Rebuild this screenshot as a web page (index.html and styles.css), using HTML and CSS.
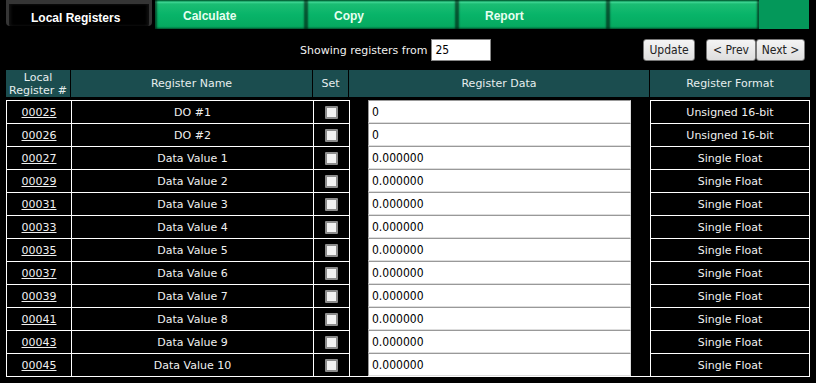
FILE: index.html
```html
<!DOCTYPE html>
<html lang="en">
<head>
    <meta charset="UTF-8">
    <title>Local Registers</title>
    <link rel="stylesheet" href="styles.css">
</head>
<body>
    <!-- Top navigation tabs -->
    <div class="tabs">
        <div class="tab tab-active"><span>Local Registers</span></div>
        <div class="tab">Calculate</div>
        <div class="tab">Copy</div>
        <div class="tab">Report</div>
        <div class="tab"></div>
        <div class="tab-end"></div>
    </div>

    <!-- Paging controls -->
    <div class="controls">
        <div class="showing">
            <span>Showing registers from</span>
            <input type="text" class="start-box" value="25">
        </div>
        <div class="buttons">
            <button class="btn btn-update">Update</button>
            <button class="btn btn-prev">&lt; Prev</button><button class="btn btn-next">Next &gt;</button>
        </div>
    </div>

    <table class="registers">
        <thead>
            <tr>
                <th class="col-num">Local<br>Register #</th>
                <th class="col-name">Register Name</th>
                <th class="col-set">Set</th>
                <th class="col-data">Register Data</th>
                <th class="col-format">Register Format</th>
            </tr>
        </thead>
        <tbody>
            <tr><td><a href="#">00025</a></td><td>DO #1</td><td><input type="checkbox" class="chk"></td><td class="data"><input type="text" class="data-box" value="0"></td><td>Unsigned 16-bit</td></tr>
            <tr><td><a href="#">00026</a></td><td>DO #2</td><td><input type="checkbox" class="chk"></td><td class="data"><input type="text" class="data-box" value="0"></td><td>Unsigned 16-bit</td></tr>
            <tr><td><a href="#">00027</a></td><td>Data Value 1</td><td><input type="checkbox" class="chk"></td><td class="data"><input type="text" class="data-box" value="0.000000"></td><td>Single Float</td></tr>
            <tr><td><a href="#">00029</a></td><td>Data Value 2</td><td><input type="checkbox" class="chk"></td><td class="data"><input type="text" class="data-box" value="0.000000"></td><td>Single Float</td></tr>
            <tr><td><a href="#">00031</a></td><td>Data Value 3</td><td><input type="checkbox" class="chk"></td><td class="data"><input type="text" class="data-box" value="0.000000"></td><td>Single Float</td></tr>
            <tr><td><a href="#">00033</a></td><td>Data Value 4</td><td><input type="checkbox" class="chk"></td><td class="data"><input type="text" class="data-box" value="0.000000"></td><td>Single Float</td></tr>
            <tr><td><a href="#">00035</a></td><td>Data Value 5</td><td><input type="checkbox" class="chk"></td><td class="data"><input type="text" class="data-box" value="0.000000"></td><td>Single Float</td></tr>
            <tr><td><a href="#">00037</a></td><td>Data Value 6</td><td><input type="checkbox" class="chk"></td><td class="data"><input type="text" class="data-box" value="0.000000"></td><td>Single Float</td></tr>
            <tr><td><a href="#">00039</a></td><td>Data Value 7</td><td><input type="checkbox" class="chk"></td><td class="data"><input type="text" class="data-box" value="0.000000"></td><td>Single Float</td></tr>
            <tr><td><a href="#">00041</a></td><td>Data Value 8</td><td><input type="checkbox" class="chk"></td><td class="data"><input type="text" class="data-box" value="0.000000"></td><td>Single Float</td></tr>
            <tr><td><a href="#">00043</a></td><td>Data Value 9</td><td><input type="checkbox" class="chk"></td><td class="data"><input type="text" class="data-box" value="0.000000"></td><td>Single Float</td></tr>
            <tr class="last"><td><a href="#">00045</a></td><td>Data Value 10</td><td><input type="checkbox" class="chk"></td><td class="data"><input type="text" class="data-box" value="0.000000"></td><td>Single Float</td></tr>
        </tbody>
    </table>
</body>
</html>
```

FILE: styles.css
```css
body {
    margin: 0;
    background-color: #000;
    color: #f0f0f0;
    font-family: "DejaVu Sans", Verdana, sans-serif;
    font-size: 11px;
}
/* Tabs */
.tabs {
    display: flex;
    height: 29px;
}
.tab {
    width: 151px;
    height: 29px;
    box-sizing: border-box;
    padding-left: 28px;
    line-height: 32px;
    font-family: "Liberation Sans", Arial, sans-serif;
    font-weight: bold;
    font-size: 12px;
    color: #e6fff0;
    background: linear-gradient(#0b8a4e 0, #0a9a58 1px, #43d898 2px, #1bbd73 4px, #08b469 50%, #05aa60 90%, #03874b 100%);
    box-shadow: inset 2px 0 2px rgba(0, 0, 0, 0.55), inset -2px 0 2px rgba(0, 0, 0, 0.55);
}
.tab-active {
    width: 155px;
    padding: 0 3px 0 6px;
    background: #000;
    box-shadow: none;
    color: #fff;
}
.tab-active span {
    display: block;
    height: 22px;
    padding-left: 22px;
    line-height: 28px;
    border: 3px solid #353535;
    border-top-width: 4px;
    border-bottom: none;
    border-radius: 0 0 4px 4px;
    box-shadow: inset 2px 0 3px #111, inset -2px 0 3px #111;
    background: #000;
}
.tab-end {
    width: 50px;
    background-color: #04985a;
}
/* Controls row */
.controls {
    display: flex;
    align-items: center;
    margin-top: 10px;
    padding: 0 11px 0 300px;
    height: 22px;
}
.showing {
    display: flex;
    align-items: center;
    gap: 4px;
}
.start-box {
    width: 60px;
    height: 22px;
    box-sizing: border-box;
    border: 1px solid #888;
    padding: 0 3px;
    font-family: "DejaVu Sans Condensed", "DejaVu Sans", sans-serif;
    font-size: 12px;
    color: #000;
    background: #fff;
}
.buttons {
    margin-left: auto;
    display: flex;
}
.btn {
    height: 22px;
    padding: 0;
    border: 1px solid #777;
    border-radius: 3px;
    background: linear-gradient(#f4f4f4, #dedede);
    font-family: "DejaVu Sans Condensed", "DejaVu Sans", sans-serif;
    font-size: 12px;
    color: #222;
}
.btn-update {
    width: 52px;
}
.btn-prev {
    width: 50px;
    margin-left: 11px;
}
.btn-next {
    width: 49px;
}
/* Registers table */
.registers {
    margin: 9px 0 0 6px;
    width: 804px;
    border-collapse: separate;
    border-spacing: 0;
    table-layout: fixed;
}
.registers th {
    height: 27px;
    padding: 0;
    background-color: #1b4d4f;
    color: #e6eeee;
    font-weight: normal;
    line-height: 13px;
    border-right: 1px solid #000;
    border-bottom: 3px solid #000;
}
.registers th:last-child {
    border-right: none;
}
.col-num { width: 64px; }
.col-name { width: 241px; }
.col-set { width: 35px; }
.col-data { width: 300px; }
.registers td {
    height: 22px;
    padding: 0;
    text-align: center;
    border-top: 1px solid #fff;
    border-left: 1px solid #fff;
}
.registers td:last-child {
    border-right: 1px solid #fff;
}
.registers tr.last td {
    border-bottom: 1px solid #fff;
}
.registers td.data {
    text-align: left;
    padding-left: 18px;
    border-top: none;
    border-bottom: none;
    vertical-align: top;
}
.registers a {
    color: #f0f0f0;
}
.data-box {
    display: block;
    width: 263px;
    height: 23px;
    box-sizing: border-box;
    margin: 0;
    padding: 0 3px;
    border: 1px solid #999;
    border-right-color: #ddd;
    border-bottom-color: #ddd;
    font-family: "DejaVu Sans Condensed", "DejaVu Sans", sans-serif;
    font-size: 12px;
    color: #000;
    background: #fff;
}
.chk {
    appearance: none;
    display: block;
    margin: 0 auto;
    width: 13px;
    height: 13px;
    border: 2px solid #8c8c8c;
    border-radius: 1px;
    background: #f2f2f2;
}
```
